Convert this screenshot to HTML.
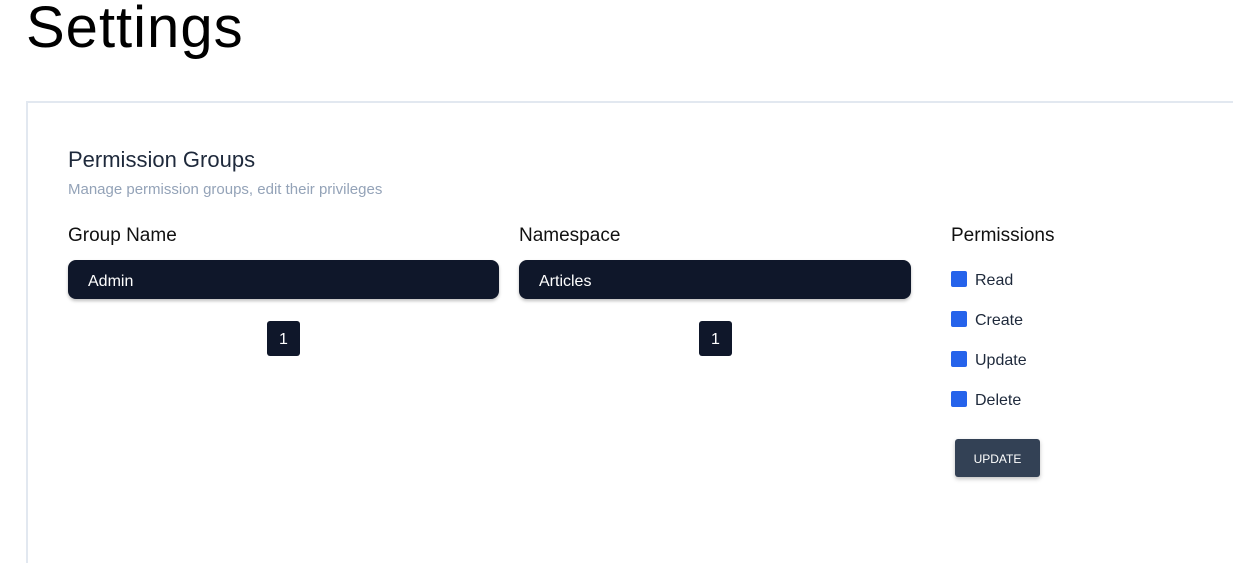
<!DOCTYPE html>
<html><head><style>
body{margin:0;width:1233px;height:541px;overflow:hidden;background:#fff;font-family:"Liberation Sans",sans-serif;position:relative}
.a{position:absolute;white-space:nowrap}
.inp{position:absolute;top:260px;height:39px;background:#0f172a;border-radius:8px;color:#fff;font-size:16px;line-height:43px;padding-left:20px;box-sizing:border-box;box-shadow:0 2px 3px rgba(0,0,0,.25)}
.pg{position:absolute;top:321px;width:33px;height:35px;background:#0f172a;border-radius:3px;color:#fff;font-size:16px;line-height:37px;text-align:center}
.cb{position:absolute;left:951px;width:16px;height:16px;background:#2563eb;border-radius:2px}
.lb{position:absolute;left:975px;font-size:16px;color:#1e293b}
</style></head><body>
<div class="a" style="left:26px;top:-6px;font-size:58px;color:#000;letter-spacing:1px">Settings</div>
<div class="a" style="left:26px;top:101px;width:1220px;height:460px;border-top:2px solid #e2e8f0;border-left:2px solid #e2e8f0"></div>
<div class="a" style="left:68px;top:147px;font-size:22px;color:#1e293b">Permission Groups</div>
<div class="a" style="left:68px;top:181px;font-size:15px;color:#94a3b8">Manage permission groups, edit their privileges</div>
<div class="a" style="left:68px;top:225px;font-size:19px;color:#111">Group Name</div>
<div class="a" style="left:519px;top:225px;font-size:19px;color:#111">Namespace</div>
<div class="a" style="left:951px;top:225px;font-size:19px;color:#111">Permissions</div>
<div class="inp" style="left:68px;width:431px">Admin</div>
<div class="inp" style="left:519px;width:392px">Articles</div>
<div class="pg" style="left:267px">1</div>
<div class="pg" style="left:699px">1</div>
<div class="cb" style="top:271px"></div><div class="lb" style="top:272px">Read</div>
<div class="cb" style="top:311px"></div><div class="lb" style="top:312px">Create</div>
<div class="cb" style="top:351px"></div><div class="lb" style="top:352px">Update</div>
<div class="cb" style="top:391px"></div><div class="lb" style="top:392px">Delete</div>
<div class="a" style="left:955px;top:439px;width:85px;height:38px;background:#334155;border-radius:3px;color:#fff;font-size:12px;line-height:40px;text-align:center;box-shadow:0 2px 4px rgba(0,0,0,.25)">UPDATE</div>
</body></html>
